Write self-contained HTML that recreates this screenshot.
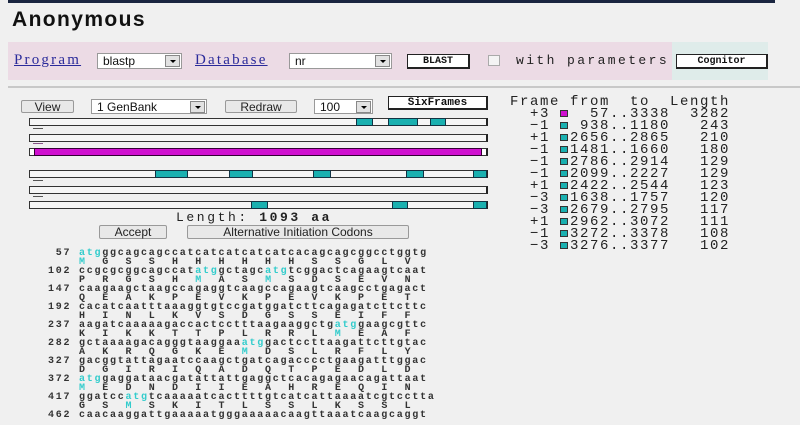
<!DOCTYPE html>
<html><head><meta charset="utf-8"><style>
*{margin:0;padding:0;box-sizing:border-box}
body{width:800px;height:425px;overflow:hidden;background:#f0f0f0;position:relative;font-family:"Liberation Sans",sans-serif;color:#111}
.a{position:absolute}
.top{left:8px;top:0;width:767px;height:3px;background:#1a2540}
h1{position:absolute;left:12px;top:8px;font-size:21px;font-weight:bold;letter-spacing:1.4px}
.pink{left:8px;top:42px;width:664px;height:38px;background:#ecdbe5}
.teal{left:672px;top:42px;width:96px;height:38px;background:#dfecea}
.hr{left:8px;top:86px;width:792px;height:2px;background:#c8c8c8}
.lnk{font-family:"Liberation Serif",serif;color:#2a2a9a;text-decoration:underline;font-size:15px;letter-spacing:2.2px}
.sel{background:#fff;border:1px solid #999;font-size:12px;padding-left:5px;line-height:14px;height:16px}
.sel i{position:absolute;right:1px;top:1px;width:15px;height:12px;background:#e2e2e2;border:1px solid #888}
.sel i:after{content:"";position:absolute;left:4px;top:4px;border:3px solid transparent;border-top:3px solid #000}
.btnk{border:1px solid #222;border-right:2px solid #222;border-bottom:2px solid #222;background:#fff;font-family:"Liberation Mono",monospace;font-weight:bold;font-size:10px;text-align:center;line-height:13px}
.btn{border:1px solid #999;border-radius:2px;background:#e8e8e8;font-size:12px;text-align:center;line-height:13px;color:#222}
.bar{position:absolute;left:29px;width:459px;height:8px;border:1px solid #333;border-right:2px solid #222;background:#f6f6f6}
.seg{position:absolute;top:-1px;height:8px;background:#1ab0b0;border:1px solid #134}
.dash{position:absolute;left:33px;width:10px;height:1px;background:#555}
.tbl{left:510px;top:96px;font-family:"Liberation Mono",monospace;font-size:14px;line-height:12px;letter-spacing:1.6px;white-space:pre;color:#222}
.sq{display:inline-block;width:8px;height:7px;border:1px solid #333;background:#1ab0b0;margin-right:2px;vertical-align:0px}
.seq{left:48px;top:249px;font-family:"Liberation Mono",monospace;font-size:10px;line-height:9px;letter-spacing:1.75px;white-space:pre;color:#333;font-weight:bold}
.seq b{color:#3cc}
</style></head><body>
<div class="a top"></div>
<h1>Anonymous</h1>
<div class="a pink"></div><div class="a teal"></div>
<div class="a lnk" style="left:14px;top:52px">Program</div>
<div class="a sel" style="left:97px;top:53px;width:85px">blastp<i></i></div>
<div class="a lnk" style="left:195px;top:52px">Database</div>
<div class="a sel" style="left:289px;top:53px;width:103px">nr<i></i></div>
<div class="a btnk" style="left:407px;top:54px;width:63px;height:15px">BLAST</div>
<div class="a" style="left:488px;top:55px;width:12px;height:11px;border:1px solid #aaa;background:#f4f4f4"></div>
<div class="a" style="left:516px;top:53px;font-family:'Liberation Mono',monospace;font-size:13px;letter-spacing:2.4px;color:#222">with parameters</div>
<div class="a btnk" style="left:676px;top:54px;width:92px;height:15px">Cognitor</div>
<div class="a hr"></div>

<div class="a btn" style="left:21px;top:100px;width:53px;height:13px">View</div>
<div class="a sel" style="left:91px;top:99px;width:116px;height:15px">1 GenBank<i></i></div>
<div class="a btn" style="left:225px;top:100px;width:72px;height:13px">Redraw</div>
<div class="a sel" style="left:314px;top:99px;width:59px;height:15px">100<i></i></div>
<div class="a btnk" style="left:388px;top:96px;width:100px;height:14px;font-size:11px">SixFrames</div>

<div class="bar" style="top:118px"><div class="seg" style="left:326px;width:17px"></div><div class="seg" style="left:358px;width:30px"></div><div class="seg" style="left:400px;width:16px"></div></div>
<div class="dash" style="top:128px"></div>
<div class="bar" style="top:134px"></div>
<div class="dash" style="top:143px;background:#858"></div>
<div class="bar" style="top:148px;background:#fff"><div class="seg" style="left:4px;width:448px;background:#d010d0;border-color:#303"></div></div>
<div class="bar" style="top:170px"><div class="seg" style="left:125px;width:33px"></div><div class="seg" style="left:199px;width:24px"></div><div class="seg" style="left:283px;width:18px"></div><div class="seg" style="left:376px;width:18px"></div><div class="seg" style="left:443px;width:14px"></div></div>
<div class="dash" style="top:180px"></div>
<div class="bar" style="top:186px"></div>
<div class="dash" style="top:196px"></div>
<div class="bar" style="top:201px"><div class="seg" style="left:221px;width:17px"></div><div class="seg" style="left:362px;width:16px"></div><div class="seg" style="left:443px;width:14px"></div></div>

<div class="a" style="left:176px;top:210px;font-family:'Liberation Mono',monospace;font-size:13px;letter-spacing:2.6px;color:#222">Length: <b>1093 aa</b></div>
<div class="a btn" style="left:99px;top:225px;width:68px;height:14px">Accept</div>
<div class="a btn" style="left:187px;top:225px;width:222px;height:14px">Alternative Initiation Codons</div>

<div class="a tbl">Frame from  to  Length
  +3 <span class="sq" style="background:#d010d0"></span>  57..3338  3282
  −1 <span class="sq"></span> 938..1180   243
  +1 <span class="sq"></span>2656..2865   210
  −1 <span class="sq"></span>1481..1660   180
  −1 <span class="sq"></span>2786..2914   129
  −1 <span class="sq"></span>2099..2227   129
  +1 <span class="sq"></span>2422..2544   123
  −3 <span class="sq"></span>1638..1757   120
  −3 <span class="sq"></span>2679..2795   117
  +1 <span class="sq"></span>2962..3072   111
  −1 <span class="sq"></span>3272..3378   108
  −3 <span class="sq"></span>3276..3377   102</div>

<div class="a seq"> 57 <b>atg</b>ggcagcagccatcatcatcatcatcacagcagcggcctggtg
    <b>M</b>  G  S  S  H  H  H  H  H  H  S  S  G  L  V
102 ccgcgcggcagccat<b>atg</b>gctagc<b>atg</b>tcggactcagaagtcaat
    P  R  G  S  H  <b>M</b>  A  S  <b>M</b>  S  D  S  E  V  N
147 caagaagctaagccagaggtcaagccagaagtcaagcctgagact
    Q  E  A  K  P  E  V  K  P  E  V  K  P  E  T
192 cacatcaatttaaaggtgtccgatggatcttcagagatcttcttc
    H  I  N  L  K  V  S  D  G  S  S  E  I  F  F
237 aagatcaaaaagaccactcctttaagaaggctg<b>atg</b>gaagcgttc
    K  I  K  K  T  T  P  L  R  R  L  <b>M</b>  E  A  F
282 gctaaaagacagggtaaggaa<b>atg</b>gactccttaagattcttgtac
    A  K  R  Q  G  K  E  <b>M</b>  D  S  L  R  F  L  Y
327 gacggtattagaatccaagctgatcagacccctgaagatttggac
    D  G  I  R  I  Q  A  D  Q  T  P  E  D  L  D
372 <b>atg</b>gaggataacgatattattgaggctcacagagaacagattaat
    <b>M</b>  E  D  N  D  I  I  E  A  H  R  E  Q  I  N
417 ggatcc<b>atg</b>tcaaaaatcacttttgtcatcattaaaatcgtcctta
    G  S  <b>M</b>  S  K  I  T  L  S  S  L  K  S  S  L
462 caacaaggattgaaaaatgggaaaaacaagttaaatcaagcaggt</div>
</body></html>
